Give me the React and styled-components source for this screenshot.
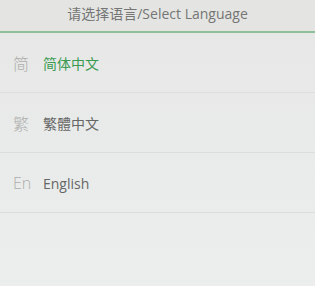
import React from 'react'
import styled, { createGlobalStyle } from 'styled-components'

const languages = [
    { glyph: '简', label: '简体中文', active: true },
    { glyph: '繁', label: '繁體中文' },
    { glyph: 'En', label: 'English' },
]

const GlobalStyle = createGlobalStyle`
    html, body {
        margin: 0;
        padding: 0;
        background: #e9eae9;
    }
    body {
        font-family: "Open Sans", "Noto Sans CJK SC", sans-serif;
    }
`

function App() {
    return (
        <>
            <GlobalStyle />
            <Screen>
                <Header>请选择语言/Select Language</Header>
                <List>
                    {languages.map((item, index) => (
                        <Row key={index}>
                            <Glyph>{item.glyph}</Glyph>
                            <Label active={item.active}>{item.label}</Label>
                        </Row>
                    ))}
                </List>
            </Screen>
        </>
    )
}

const Screen = styled.div`
    width: 315px;
    height: 286px;
    background: linear-gradient(180deg, #e6e7e5 0%, #e9ebea 50%, #eceded 100%);
    display: flex;
    flex-direction: column;
    overflow: hidden;
`

const Header = styled.div`
    height: 33px;
    box-sizing: border-box;
    padding-bottom: 6px;
    display: flex;
    align-items: center;
    justify-content: center;
    font-size: 14px;
    color: #747574;
    border-bottom: 2px solid #8fbf98;
    background: #e4e5e3;
`

const List = styled.div`
    display: flex;
    flex-direction: column;
`

const Row = styled.div`
    height: 60px;
    display: flex;
    align-items: center;
    padding-left: 13px;
    gap: 12px;
    border-bottom: 1px solid #dcdedd;
    box-sizing: border-box;
    padding-top: 1px;
`

const Glyph = styled.span`
    width: 18px;
    font-size: 16px;
    color: #adaead;
    font-weight: 300;
`

const Label = styled.span`
    font-size: 14px;
    color: ${({ active }) => (active ? '#3a9a52' : '#666766')};
`

export default App
